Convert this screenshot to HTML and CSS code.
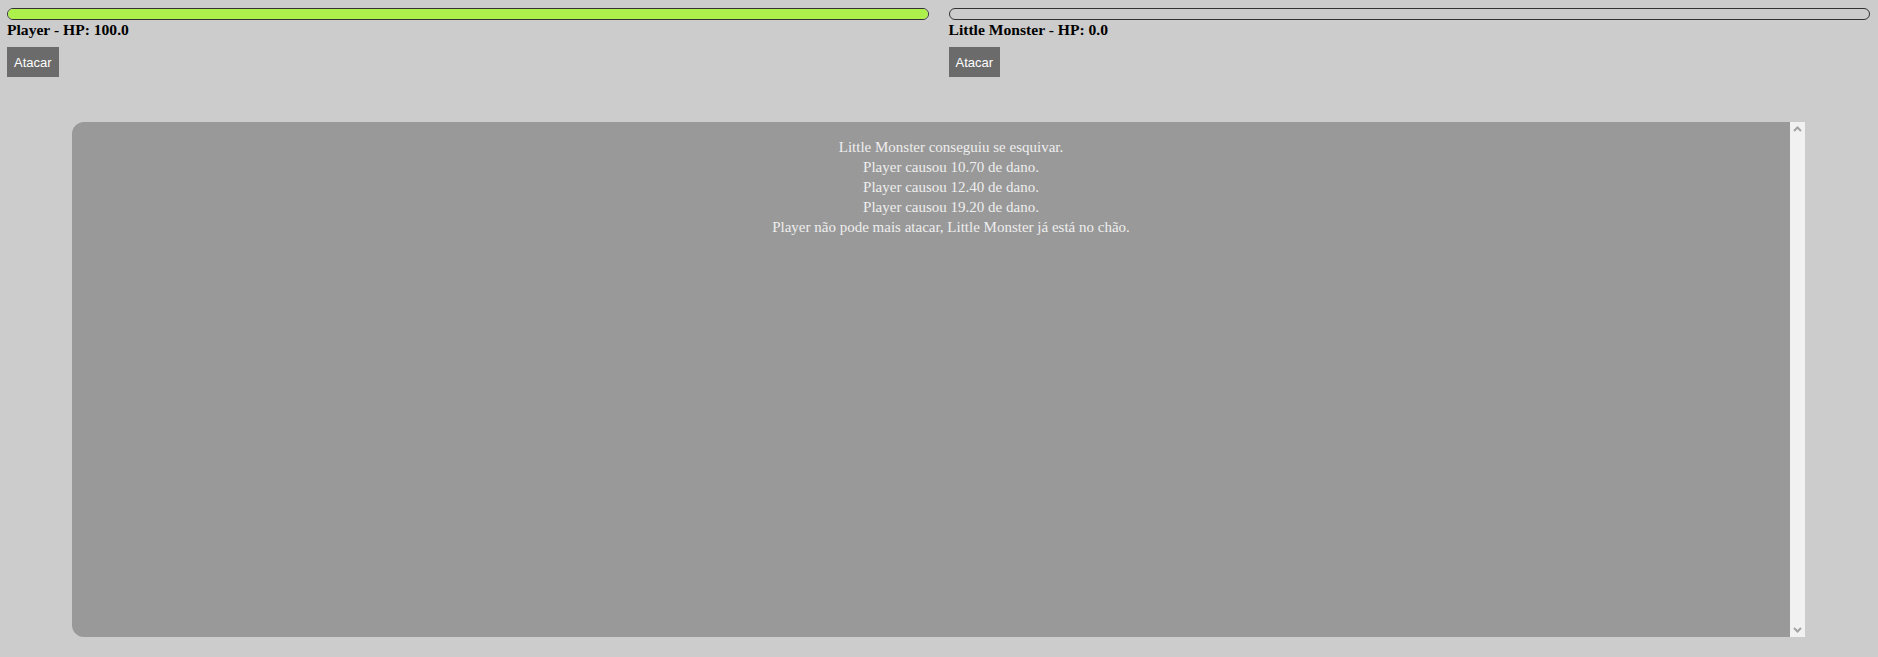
FILE: index.html
```html
<!DOCTYPE html>
<html lang="pt">
<head>
<meta charset="utf-8">
<title>Batalha</title>
<link rel="stylesheet" href="styles.css">
</head>
<body>
<div class="fighters">
  <div class="fighter">
    <div class="hpbar"><div class="hpfill" style="width:100%"></div></div>
    <div class="name">Player - HP: 100.0</div>
    <button class="attack">Atacar</button>
  </div>
  <div class="fighter">
    <div class="hpbar"><div class="hpfill" style="width:0%"></div></div>
    <div class="name">Little Monster - HP: 0.0</div>
    <button class="attack">Atacar</button>
  </div>
</div>
<div class="log">
  <div class="log-content">
    <ul class="log-list">
      <li>Little Monster conseguiu se esquivar.</li>
      <li>Player causou 10.70 de dano.</li>
      <li>Player causou 12.40 de dano.</li>
      <li>Player causou 19.20 de dano.</li>
      <li>Player não pode mais atacar, Little Monster já está no chão.</li>
    </ul>
  </div>
  <div class="scrollbar">
    <svg class="arrow" width="15" height="15" viewBox="0 0 15 15"><path d="M4 9 L7.5 5.5 L11 9" fill="none" stroke="#a3a3a3" stroke-width="2"/></svg>
    <svg class="arrow" width="15" height="15" viewBox="0 0 15 15"><path d="M4 6 L7.5 9.5 L11 6" fill="none" stroke="#a3a3a3" stroke-width="2"/></svg>
  </div>
</div>
</body>
</html>
```
FILE: styles.css
```css
html, body {
  background: #cccccc;
}
body {
  margin: 8px 8px 8px 7px;
  font-family: "Liberation Serif", "Times New Roman", serif;
  color: #000;
}
.fighters {
  display: flex;
  gap: 20px;
}
.fighter {
  flex: 1 1 0;
  display: flex;
  flex-direction: column;
  align-items: flex-start;
}
.hpbar {
  align-self: stretch;
  height: 10px;
  border: 1px solid #333;
  border-radius: 6px;
  overflow: hidden;
  background: #cccccc;
}
.hpfill {
  height: 100%;
  background: #adf04b;
}
.name {
  font-weight: bold;
  font-size: 15.6px;
  line-height: 18px;
  padding-top: 1px;
}
.attack {
  margin-top: 8px;
  height: 30px;
  padding: 0 7px;
  border: none;
  background: #6b6b6b;
  color: #ffffff;
  font-family: "Liberation Sans", Arial, sans-serif;
  font-size: 13px;
}
.log {
  width: 93%;
  height: 515px;
  margin: 45px auto 0;
  display: flex;
  background: #999999;
  border-radius: 12px 0 0 12px;
  color: #eeeeee;
  font-size: 15px;
}
.log-content {
  flex: 1 1 auto;
  overflow: hidden;
}
.log-list {
  list-style: none;
  text-align: center;
  margin: 15px 0;
  padding-left: 40px;
  line-height: 20px;
}
.scrollbar {
  width: 15px;
  flex: 0 0 15px;
  background: #f1f1f1;
  display: flex;
  flex-direction: column;
  justify-content: space-between;
}
.arrow {
  display: block;
}
```
